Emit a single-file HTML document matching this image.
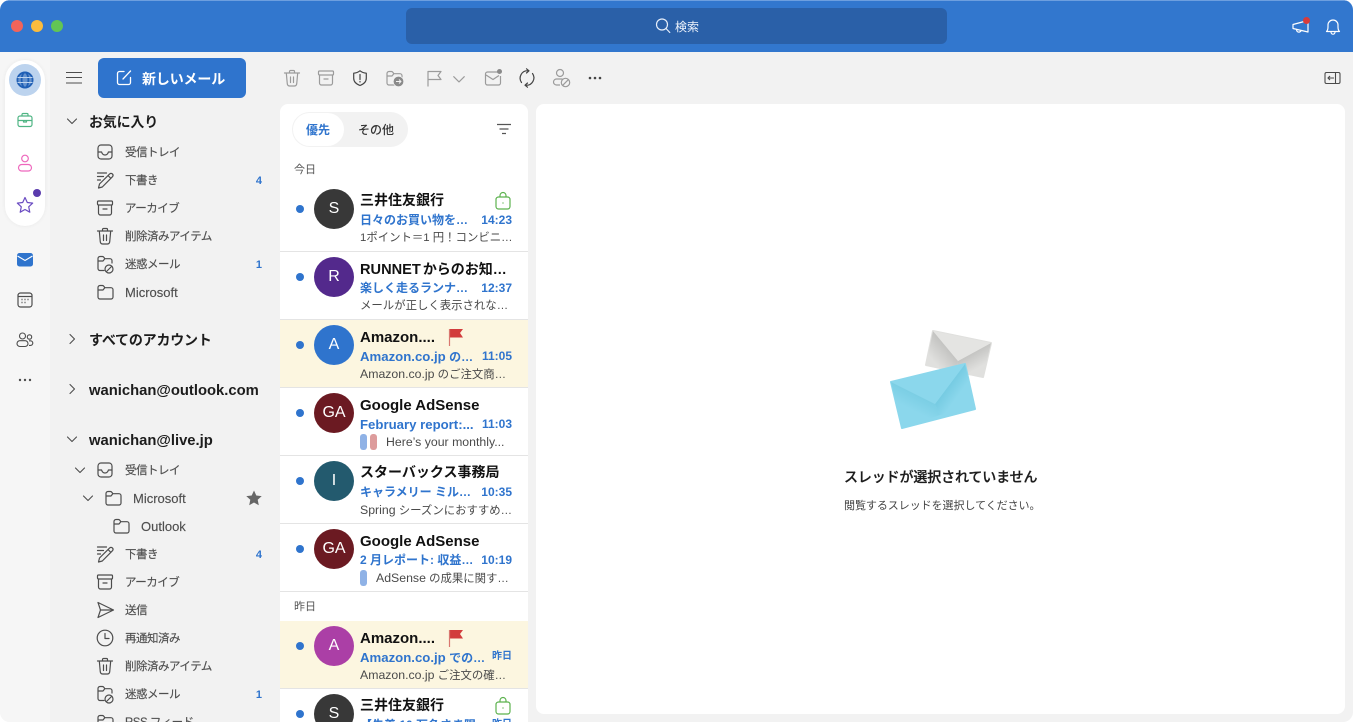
<!DOCTYPE html>
<html lang="ja"><head><meta charset="utf-8"><title>Outlook</title>
<style>
html,body{margin:0;padding:0;width:1353px;height:722px;overflow:hidden;background:#fff}
body{font-family:"Liberation Sans","Noto Sans CJK JP",sans-serif;position:relative}
#app{position:absolute;left:0;top:0;width:1353px;height:722px;background:#f2f2f2;border-radius:10px;overflow:hidden}
.a{position:absolute;white-space:nowrap}
svg{position:absolute;overflow:visible}
.i{width:20px;height:20px;fill:none;stroke:#4d4d4d;stroke-width:1.2;stroke-linecap:round;stroke-linejoin:round}
.g{stroke:#9b9b9b}
.t{position:absolute;white-space:nowrap;height:20px;line-height:20px;font-size:11.5px;letter-spacing:-.5px;color:#4f4f4f;transform:translateY(1px);-webkit-text-stroke:.15px #4f4f4f}
.l{font-size:13px;letter-spacing:0}
.h{position:absolute;white-space:nowrap;height:20px;line-height:20px;font-size:14px;letter-spacing:-.2px;font-weight:700;color:#1c1c1c;left:89px;transform:translateY(1px)}
.m{font-size:14.8px;letter-spacing:0;transform:translateY(2px)}
.c{position:absolute;left:240px;width:22px;text-align:right;height:20px;line-height:20px;font-size:11px;font-weight:700;color:#2f74cd;transform:translateY(1px)}
.row{position:absolute;left:280px;width:248px;height:67px;border-bottom:1px solid #e4e4e4;background:#fff}
.y{background:#fcf6e0}
.dot{position:absolute;left:16px;width:8px;height:8px;border-radius:50%;background:#2f74cd;top:21px}
.av{position:absolute;left:34px;top:5px;width:40px;height:40px;border-radius:50%;color:#fff;text-align:center;line-height:40px;font-size:16px}
.n{position:absolute;left:80px;top:6px;line-height:20px;font-size:14px;font-weight:700;color:#111;white-space:nowrap}
.n.e{font-size:15px;top:8px}
.s{position:absolute;left:80px;top:26px;line-height:20px;font-size:12px;font-weight:700;color:#2f74cd;white-space:nowrap}
.s b,.p b{font-weight:inherit}
.s b{font-size:13.2px}
.tm{position:absolute;right:16px;top:26px;line-height:20px;font-size:12px;font-weight:700;color:#2f74cd;white-space:nowrap}
.tm.d{font-size:10px}
.p{position:absolute;left:80px;top:44px;line-height:20px;font-size:11.4px;color:#4a4a4a;white-space:nowrap}
.p b{font-size:12.3px}
.cat{position:absolute;top:46px;width:7px;height:16px;border-radius:3px}
</style></head><body>
<svg width="0" height="0" style="position:absolute"><defs>
<symbol id="inbox" viewBox="0 0 20 20"><rect x="3" y="3" width="14" height="14" rx="3"/><path d="M3 10h3.6c.5 2 1.800 3 3.400 3s2.900-1 3.400-3H17"/></symbol>
<symbol id="draft" viewBox="0 0 20 20"><path d="M2.500 3h9M2.500 6.500h6M2.500 10h3M3.500 18l1-4L14.800 3.800a2 2 0 0 1 2.800 2.800L7.300 17zM13 5.500l2.800 2.800"/></symbol>
<symbol id="arch" viewBox="0 0 20 20"><rect x="2.500" y="3" width="15" height="4" rx="1"/><path d="M3.500 7v8a2 2 0 0 0 2 2h9a2 2 0 0 0 2-2V7M8 11h4"/></symbol>
<symbol id="trash" viewBox="0 0 20 20"><path d="M2.500 5h15M7.500 5V3.500a1 1 0 0 1 1-1h3a1 1 0 0 1 1 1V5M4.300 5l1 11a2.500 2.500 0 0 0 2.500 2h4.400a2.500 2.500 0 0 0 2.500-2l1-11M8.500 9v5.500M11.500 9v5.500"/></symbol>
<symbol id="folder" viewBox="0 0 20 20"><path d="M3 5.500a2 2 0 0 1 2-2h2.500a2 2 0 0 1 1.500 1l.8 1.200H16a2 2 0 0 1 2 2V15a2 2 0 0 1-2 2H5a2 2 0 0 1-2-2zM3 8h5l1.800-2.300"/></symbol>
<symbol id="junk" viewBox="0 0 20 20"><path d="M9 16.500H5a2 2 0 0 1-2-2v-10a2 2 0 0 1 2-2h2.500a2 2 0 0 1 1.500 1l.8 1.200H15a2 2 0 0 1 2 2V9M3 7h5l1.800-2.300"/><circle cx="14" cy="15" r="4"/><path d="M11.500 17.500l5-5"/></symbol>
<symbol id="send" viewBox="0 0 20 20"><path d="M3 2.500L18.500 10 3 17.500 5.500 10zM5.500 10h13"/></symbol>
<symbol id="clock" viewBox="0 0 20 20"><circle cx="10" cy="10" r="7.800"/><path d="M10 5.500v5h4"/></symbol>
<symbol id="cd" viewBox="0 0 12 12"><path d="M1.500 4L6 8.500 10.500 4"/></symbol>
<symbol id="cr" viewBox="0 0 12 12"><path d="M4 1.500L8.500 6 4 10.500"/></symbol>
</defs></svg>
<div id="app">
<!-- top bar -->
<div class="a" style="left:0;top:0;width:1353px;height:52px;background:#3277ce;border-top:1px solid #6d9fdf;box-sizing:border-box"></div>
<div class="a" style="left:11px;top:20px;width:12px;height:12px;border-radius:50%;background:#f2645a"></div>
<div class="a" style="left:31px;top:20px;width:12px;height:12px;border-radius:50%;background:#fbbc3d"></div>
<div class="a" style="left:51px;top:20px;width:12px;height:12px;border-radius:50%;background:#62c554"></div>
<div class="a" style="left:406px;top:8px;width:541px;height:36px;border-radius:6px;background:#2a60a8"></div>
<svg style="left:655px;top:18px" width="16" height="16" viewBox="0 0 16 16" fill="none" stroke="#e6eefa" stroke-width="1.200" stroke-linecap="round"><circle cx="7" cy="6.500" r="5.500"/><path d="M11 10.500l3.800 4"/></svg>
<div class="a" style="left:675px;top:18px;line-height:18px;font-size:12px;color:#eef3fb">検索</div>
<svg style="left:1291px;top:17px" width="20" height="20" viewBox="0 0 20 20" fill="none" stroke="#fff" stroke-width="1.200" stroke-linejoin="round"><path d="M2 7.500L17 3.500v11.500L2 11.500zM5.500 12.500c0 2 1.500 3 3 2.500 1-.3 1.500-1 1.700-1.600"/></svg>
<div class="a" style="left:1303px;top:17px;width:7px;height:7px;border-radius:50%;background:#d83b3b"></div>
<svg style="left:1323px;top:17px" width="20" height="20" viewBox="0 0 20 20" fill="none" stroke="#fff" stroke-width="1.200" stroke-linejoin="round"><path d="M3.500 14.500c1.200-1.200 1.500-2.500 1.500-4.500V8a5 5 0 0 1 10 0v2c0 2 .3 3.300 1.500 4.500zM8 15c0 1.300.9 2.200 2 2.200s2-.9 2-2.200"/></svg>

<!-- rail -->
<div class="a" style="left:0;top:52px;width:50px;height:670px;background:#f6f6f6"></div>
<div class="a" style="left:5px;top:60px;width:40px;height:166px;border-radius:20px;background:#fff;box-shadow:0 0 4px rgba(0,0,0,.06)"></div>
<div class="a" style="left:9px;top:64px;width:32px;height:32px;border-radius:50%;background:#bcd3ee"></div>
<svg style="left:16px;top:71px" width="18" height="18" viewBox="0 0 18 18" fill="none" stroke="#1f5fb5" stroke-width="1.800"><circle cx="9" cy="9" r="7.600" fill="#1f5fb5" fill-opacity=".55"/><ellipse cx="9" cy="9" rx="3.400" ry="7.600"/><path d="M1.500 6.500h15M1.500 11.500h15" stroke="#bcd3ee" stroke-width="1"/></svg>
<svg style="left:16px;top:111px" width="18" height="18" viewBox="0 0 18 18" fill="none" stroke="#4fb584" stroke-width="1.200" stroke-linejoin="round"><rect x="2" y="5" width="14" height="10.500" rx="2"/><path d="M6 5V3.500a1 1 0 0 1 1-1h4a1 1 0 0 1 1 1V5M2 9.500h14M7.500 9.500v1.500h3V9.500"/></svg>
<svg style="left:16px;top:154px" width="18" height="18" viewBox="0 0 18 18" fill="none" stroke="#ee68bd" stroke-width="1.200"><circle cx="9" cy="4.500" r="3.300"/><rect x="2.500" y="10.500" width="13" height="6.500" rx="3.250"/></svg>
<svg style="left:16px;top:196px" width="18" height="18" viewBox="0 0 18 18" fill="none" stroke="#6b4cc2" stroke-width="1.200" stroke-linejoin="round"><path d="M9 1.500l2.300 5 5.400.6-4 3.700 1.100 5.400L9 13.500l-4.800 2.700 1.100-5.400-4-3.700 5.400-.6z"/></svg>
<div class="a" style="left:33px;top:189px;width:8px;height:8px;border-radius:50%;background:#5a3bad"></div>
<svg style="left:17px;top:253px" width="16" height="14" viewBox="0 0 16 14"><rect width="16" height="13.500" rx="2.500" fill="#2f74cd"/><path d="M.5 3L8 7.500 15.500 3" fill="none" stroke="#fff" stroke-width="1.100"/></svg>
<svg style="left:17px;top:292px" width="16" height="16" viewBox="0 0 16 16" fill="none" stroke="#4d4d4d" stroke-width="1.200"><rect x="1" y="1" width="14" height="14" rx="2.500"/><path d="M1 4.500h14"/><path d="M4.500 7.500h1M7.500 7.500h1M10.500 7.500h1M4.500 10.500h1M7.500 10.500h1" stroke-width="1.500"/></svg>
<svg style="left:16px;top:332px" width="18" height="16" viewBox="0 0 18 16" fill="none" stroke="#4d4d4d" stroke-width="1.100"><circle cx="6.500" cy="4" r="3"/><circle cx="13.500" cy="5" r="2.200"/><rect x="1" y="8.700" width="11" height="5.800" rx="2.900"/><path d="M13 8.800h1.500a2.300 2.300 0 0 1 2.300 2.300 2.300 2.300 0 0 1-2.300 2.300H13"/></svg>
<svg style="left:17px;top:378px" width="16" height="4" viewBox="0 0 16 4" fill="#4d4d4d"><circle cx="3" cy="2" r="1.200"/><circle cx="8" cy="2" r="1.200"/><circle cx="13" cy="2" r="1.200"/></svg>

<!-- sidebar top -->
<svg style="left:65px;top:71px" width="18" height="14" viewBox="0 0 18 14" stroke="#4d4d4d" stroke-width="1.100"><path d="M1 1.500h16M1 6.500h16M1 12h16"/></svg>
<div class="a" style="left:98px;top:58px;width:148px;height:40px;border-radius:6px;background:#2f74cd"></div>
<svg style="left:116px;top:69px" width="17" height="17" viewBox="0 0 17 17" fill="none" stroke="#fff" stroke-width="1.300" stroke-linecap="round"><path d="M8 2.500H3.500a2 2 0 0 0-2 2v9a2 2 0 0 0 2 2h9a2 2 0 0 0 2-2V8.500M7 10l7.500-8"/></svg>
<div class="a" style="left:142px;top:68px;line-height:22px;font-size:14px;font-weight:700;color:#fff;letter-spacing:-.15px">新しいメール</div>

<!-- sidebar favorites -->
<svg class="i" style="left:66px;top:115px;width:12px;height:12px;stroke-width:1.100" viewBox="0 0 12 12"><use href="#cd"/></svg>
<div class="h" style="top:111px">お気に入り</div>
<svg class="i" style="left:95px;top:142px"><use href="#inbox"/></svg><div class="t" style="left:125px;top:142px">受信トレイ</div>
<svg class="i" style="left:95px;top:170px"><use href="#draft"/></svg><div class="t" style="left:125px;top:170px">下書き</div><div class="c" style="top:170px">4</div>
<svg class="i" style="left:95px;top:198px"><use href="#arch"/></svg><div class="t" style="left:125px;top:198px">アーカイブ</div>
<svg class="i" style="left:95px;top:226px"><use href="#trash"/></svg><div class="t" style="left:125px;top:226px">削除済みアイテム</div>
<svg class="i" style="left:95px;top:254px"><use href="#junk"/></svg><div class="t" style="left:125px;top:254px">迷惑メール</div><div class="c" style="top:254px">1</div>
<svg class="i" style="left:95px;top:282px"><use href="#folder"/></svg><div class="t l" style="left:125px;top:282px">Microsoft</div>

<svg class="i" style="left:66px;top:333px;width:12px;height:12px;stroke-width:1.100" viewBox="0 0 12 12"><use href="#cr"/></svg>
<div class="h" style="top:329px">すべてのアカウント</div>
<svg class="i" style="left:66px;top:383px;width:12px;height:12px;stroke-width:1.100" viewBox="0 0 12 12"><use href="#cr"/></svg>
<div class="h m" style="top:379px">wanichan@outlook.com</div>
<svg class="i" style="left:66px;top:433px;width:12px;height:12px;stroke-width:1.100" viewBox="0 0 12 12"><use href="#cd"/></svg>
<div class="h m" style="top:429px">wanichan@live.jp</div>

<svg class="i" style="left:74px;top:464px;width:12px;height:12px;stroke-width:1.100" viewBox="0 0 12 12"><use href="#cd"/></svg>
<svg class="i" style="left:95px;top:460px"><use href="#inbox"/></svg><div class="t" style="left:125px;top:460px">受信トレイ</div>
<svg class="i" style="left:82px;top:492px;width:12px;height:12px;stroke-width:1.100" viewBox="0 0 12 12"><use href="#cd"/></svg>
<svg class="i" style="left:103px;top:488px"><use href="#folder"/></svg><div class="t l" style="left:133px;top:488px">Microsoft</div>
<svg style="left:245px;top:489px" width="18" height="18" viewBox="0 0 18 18" fill="#666"><path d="M9 1.500l2.300 5 5.400.6-4 3.700 1.100 5.400L9 13.500l-4.800 2.700 1.100-5.400-4-3.700 5.400-.6z"/></svg>
<svg class="i" style="left:111px;top:516px"><use href="#folder"/></svg><div class="t l" style="left:141px;top:516px">Outlook</div>
<svg class="i" style="left:95px;top:544px"><use href="#draft"/></svg><div class="t" style="left:125px;top:544px">下書き</div><div class="c" style="top:544px">4</div>
<svg class="i" style="left:95px;top:572px"><use href="#arch"/></svg><div class="t" style="left:125px;top:572px">アーカイブ</div>
<svg class="i" style="left:95px;top:600px"><use href="#send"/></svg><div class="t" style="left:125px;top:600px">送信</div>
<svg class="i" style="left:95px;top:628px"><use href="#clock"/></svg><div class="t" style="left:125px;top:628px">再通知済み</div>
<svg class="i" style="left:95px;top:656px"><use href="#trash"/></svg><div class="t" style="left:125px;top:656px">削除済みアイテム</div>
<svg class="i" style="left:95px;top:684px"><use href="#junk"/></svg><div class="t" style="left:125px;top:684px">迷惑メール</div><div class="c" style="top:684px">1</div>
<svg class="i" style="left:95px;top:712px"><use href="#folder"/></svg><div class="t" style="left:125px;top:712px">RSS フィード</div>

<!-- toolbar -->
<svg class="i g" style="left:282px;top:68px"><use href="#trash"/></svg>
<svg class="i g" style="left:316px;top:68px"><use href="#arch"/></svg>
<svg style="left:350px;top:68px" width="20" height="20" viewBox="0 0 20 20" fill="none" stroke="#444" stroke-width="1.200" stroke-linejoin="round"><path d="M10 2.800c2 1.500 4 2.200 6.300 2.400v5c0 3.500-2.500 5.800-6.300 7.300-3.800-1.500-6.300-3.800-6.300-7.300v-5C6 5 8 4.300 10 2.800z"/><path d="M10 6.500v5M10 13.500v.5" stroke-linecap="round"/></svg>
<svg class="i g" style="left:384px;top:68px"><use href="#folder"/></svg>
<svg style="left:393px;top:76px" width="11" height="11" viewBox="0 0 11 11"><circle cx="5.500" cy="5.500" r="5.300" fill="#8a8a8a" stroke="#f2f2f2" stroke-width=".8"/><path d="M3 5.500h5M6 3.500l2 2-2 2" fill="none" stroke="#f2f2f2" stroke-width=".9"/></svg>
<svg style="left:424px;top:68px" width="20" height="20" viewBox="0 0 20 20" fill="none" stroke="#9b9b9b" stroke-width="1.200" stroke-linejoin="round"><path d="M4 18.500V3.500h13l-3 4 3 4H4"/></svg>
<svg class="i g" style="left:452px;top:72px;width:14px;height:14px;stroke-width:1" viewBox="0 0 12 12"><use href="#cd"/></svg>
<svg style="left:484px;top:68px" width="20" height="20" viewBox="0 0 20 20" fill="none" stroke="#9b9b9b" stroke-width="1.200" stroke-linejoin="round"><path d="M14 4H3.500a2 2 0 0 0-2 2v9a2 2 0 0 0 2 2h11a2 2 0 0 0 2-2V8M2 7l7 4.500 6-4"/></svg>
<div class="a" style="left:497px;top:69px;width:5px;height:5px;border-radius:50%;background:#8a8a8a"></div>
<svg style="left:517px;top:68px" width="20" height="20" viewBox="0 0 20 20" fill="none" stroke="#444" stroke-width="1.200" stroke-linecap="round" stroke-linejoin="round"><path d="M4.500 14.500A7.500 7.500 0 0 1 11 2.700M15.500 5.500A7.500 7.500 0 0 1 9 17.300M9.500 .8L12 2.800 9.500 5M10.500 15L8 17.200l2.500 2"/></svg>
<svg style="left:551px;top:68px" width="20" height="20" viewBox="0 0 20 20" fill="none" stroke="#9b9b9b" stroke-width="1.200"><circle cx="9" cy="5" r="3.500"/><path d="M9 17H5.500a3 3 0 0 1 0-6h6"/><circle cx="14.500" cy="14.500" r="4.200"/><path d="M11.700 17.300l5.600-5.600"/></svg>
<svg style="left:587px;top:76px" width="16" height="4" viewBox="0 0 16 4" fill="#444"><circle cx="3" cy="2" r="1.300"/><circle cx="8" cy="2" r="1.300"/><circle cx="13" cy="2" r="1.300"/></svg>
<svg style="left:1324px;top:71px" width="18" height="14" viewBox="0 0 18 14" fill="none" stroke="#4a4a4a" stroke-width="1.100"><rect x="1" y="1.500" width="15" height="11" rx="1.500"/><path d="M11.500 1.500v11M10 7H4M6 5L4 7l2 2"/></svg>

<!-- list panel -->
<div class="a" style="left:280px;top:104px;width:248px;height:618px;background:#fff;border-radius:8px 8px 0 0;overflow:hidden"></div>
<div class="a" style="left:292px;top:112px;width:116px;height:35px;border-radius:18px;background:#f2f2f2"></div>
<div class="a" style="left:293px;top:113px;width:51px;height:33px;border-radius:17px;background:#fff"></div>
<div class="a" style="left:306px;top:120px;line-height:20px;font-size:12px;font-weight:700;color:#2f74cd">優先</div>
<div class="a" style="left:358px;top:120px;line-height:20px;font-size:12px;color:#333;font-weight:500">その他</div>
<svg style="left:496px;top:123px" width="16" height="12" viewBox="0 0 16 12" stroke="#555" stroke-width="1.300"><path d="M1 1.500h14M3.500 6h9M6 10.500h4"/></svg>
<div class="a" style="left:294px;top:160px;line-height:20px;font-size:11px;color:#555">今日</div>

<div class="row" style="top:184px"><div class="dot"></div><div class="av" style="background:#383838">S</div><div class="n">三井住友銀行</div>
<svg style="left:215px;top:8px" width="16" height="18" viewBox="0 0 16 18" fill="none" stroke="#5cb24e" stroke-width="1.200"><rect x="1" y="5" width="14" height="12" rx="2.500"/><path d="M5 5V3.500a3 3 0 0 1 6 0V5"/><path d="M8 10.500v1" stroke-width="1.400"/></svg>
<div class="s">日々のお買い物を…</div><div class="tm">14:23</div><div class="p">1ポイント＝1 円！コンビニ…</div></div>

<div class="row" style="top:252px"><div class="dot"></div><div class="av" style="background:#53298c">R</div><div class="n" style="top:7px"><span style="font-size:14.6px">RUNNET</span><span style="margin-left:2px">からのお知…</span></div>
<div class="s">楽しく走るランナ…</div><div class="tm">12:37</div><div class="p">メールが正しく表示されな…</div></div>

<div class="row y" style="top:320px"><div class="dot"></div><div class="av" style="background:#2f74cd">A</div><div class="n e">Amazon....</div>
<svg style="left:168px;top:8px" width="16" height="20" viewBox="0 0 16 20"><path d="M2 1h13l-3 4 3 4.500H2z" fill="#d23c3c"/><path d="M1.500 1v17" stroke="#d9776f" stroke-width="1.200"/></svg>
<div class="s" style="top:27px"><b>Amazon.co.jp</b> の…</div><div class="tm">11:05</div><div class="p"><b>Amazon.co.jp</b> のご注文商…</div></div>

<div class="row" style="top:388px"><div class="dot"></div><div class="av" style="background:#6b1a22">GA</div><div class="n e">Google AdSense</div>
<div class="s" style="top:27px"><b>February report:...</b></div><div class="tm">11:03</div><div class="cat" style="left:80px;background:#8fb2e6"></div><div class="cat" style="left:90px;background:#dd9c9c"></div><div class="p" style="left:106px"><b>Here’s your monthly...</b></div></div>

<div class="row" style="top:456px"><div class="dot"></div><div class="av" style="background:#235a6e">I</div><div class="n">スターバックス事務局</div>
<div class="s">キャラメリー ミル…</div><div class="tm">10:35</div><div class="p"><b>Spring</b> シーズンにおすすめ…</div></div>

<div class="row" style="top:524px"><div class="dot"></div><div class="av" style="background:#6b1a22">GA</div><div class="n e">Google AdSense</div>
<div class="s">2 月レポート: 収益…</div><div class="tm">10:19</div><div class="cat" style="left:80px;background:#8fb2e6"></div><div class="p" style="left:96px"><b>AdSense</b> の成果に関す…</div></div>

<div class="a" style="left:294px;top:597px;line-height:20px;font-size:11px;color:#555">昨日</div>

<div class="row y" style="top:621px"><div class="dot"></div><div class="av" style="background:#ab3fa6">A</div><div class="n e">Amazon....</div>
<svg style="left:168px;top:8px" width="16" height="20" viewBox="0 0 16 20"><path d="M2 1h13l-3 4 3 4.500H2z" fill="#d23c3c"/><path d="M1.500 1v17" stroke="#d9776f" stroke-width="1.200"/></svg>
<div class="s" style="top:27px"><b>Amazon.co.jp</b> での…</div><div class="tm d">昨日</div><div class="p"><b>Amazon.co.jp</b> ご注文の確…</div></div>

<div class="row" style="top:689px"><div class="dot"></div><div class="av" style="background:#383838">S</div><div class="n">三井住友銀行</div>
<svg style="left:215px;top:8px" width="16" height="18" viewBox="0 0 16 18" fill="none" stroke="#5cb24e" stroke-width="1.200"><rect x="1" y="5" width="14" height="12" rx="2.500"/><path d="M5 5V3.500a3 3 0 0 1 6 0V5"/><path d="M8 10.500v1" stroke-width="1.400"/></svg>
<div class="s">【先着 10 万名さま限…</div><div class="tm d">昨日</div></div>

<!-- reading pane -->
<div class="a" style="left:536px;top:104px;width:809px;height:610px;background:#fff;border-radius:8px"></div>
<svg style="left:880px;top:325px" width="120" height="110" viewBox="0 0 120 110">
<defs>
<linearGradient id="gl" gradientUnits="userSpaceOnUse" x1="65" y1="21" x2="51" y2="33"><stop offset="0" stop-color="#c4c4c2"/><stop offset="1" stop-color="#e0e0de"/></linearGradient>
<linearGradient id="gr" gradientUnits="userSpaceOnUse" x1="94" y1="27" x2="102" y2="41"><stop offset="0" stop-color="#c4c4c2"/><stop offset="1" stop-color="#e0e0de"/></linearGradient>
<linearGradient id="bl" gradientUnits="userSpaceOnUse" x1="33" y1="68" x2="26" y2="82"><stop offset="0" stop-color="#7bcee4"/><stop offset="1" stop-color="#8bd7ec"/></linearGradient>
<linearGradient id="br" gradientUnits="userSpaceOnUse" x1="70" y1="59" x2="81" y2="67"><stop offset="0" stop-color="#76cbe2"/><stop offset="1" stop-color="#8bd7ec"/></linearGradient>
</defs>
<path d="M53 6L111 18 103 52 46 40z" fill="#e0e0de" stroke="#e0e0de" stroke-width="2" stroke-linejoin="round"/>
<path d="M53 6L78 36 75 48 46 40z" fill="url(#gl)"/>
<path d="M111 18L78 36 75 48 103 52z" fill="url(#gr)"/>
<path d="M53 6L111 18 78 36z" fill="#e4e4e2"/>
<path d="M11 57L85 39 95 84 22 103z" fill="#8bd7ec" stroke="#8bd7ec" stroke-width="2" stroke-linejoin="round"/>
<path d="M11 57L55 79 60 90 22 103z" fill="url(#bl)"/>
<path d="M85 39L55 79 60 90 95 84z" fill="url(#br)"/>
<path d="M11 57L85 39 55 79z" fill="#8bd7ec"/>
</svg>
<div class="a" style="left:844px;top:467px;line-height:20px;font-size:14px;color:#1c1c1c;font-weight:500;letter-spacing:-.13px;-webkit-text-stroke:.25px #1c1c1c">スレッドが選択されていません</div>
<div class="a" style="left:844px;top:496px;line-height:20px;font-size:11px;letter-spacing:-.05px;color:#444">閲覧するスレッドを選択してください。</div>
</div>
</body></html>
